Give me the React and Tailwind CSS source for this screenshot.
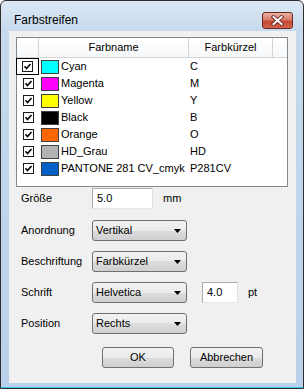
const colors = [
  { name: 'Cyan', code: 'C', color: '#00ffff' },
  { name: 'Magenta', code: 'M', color: '#ff00ff' },
  { name: 'Yellow', code: 'Y', color: '#ffff00' },
  { name: 'Black', code: 'B', color: '#000000' },
  { name: 'Orange', code: 'O', color: '#ff6600' },
  { name: 'HD_Grau', code: 'HD', color: '#b3b3b3' },
  { name: 'PANTONE 281 CV_cmyk', code: 'P281CV', color: '#0060c8' },
]

export default function App() {
  return (
    <div className="w-[304px] h-[389px] bg-white font-['Liberation_Sans',Arial,sans-serif] text-black">
      <div className="w-[304px] h-[389px] flex flex-col rounded-t-[6px] border border-[#2e2e2e] bg-[linear-gradient(to_bottom,#dce8f5,#c6d9ed_30px,#b9d1ea)] overflow-hidden">
        {/* title bar */}
        <div className="h-[30px] flex items-start justify-between pl-[13px] pr-[10px] shrink-0">
          <span className="mt-[12px] text-[12px] leading-[14px]">Farbstreifen</span>
          <CloseButton />
        </div>

        {/* client */}
        <div className="ml-[8px] w-[287px] h-[352px] shrink-0 bg-[#f0f0f0] flex flex-col text-[11px] leading-[13px]">
          <ColorTable />

          <div className="flex flex-col pl-[12px]">
            <Row label="Größe" className="mt-[1px]">
              <TextBox value="5.0" width="w-[61px]" />
              <span className="ml-[10px]">mm</span>
            </Row>
            <Row label="Anordnung" className="mt-[11px]">
              <Combo value="Vertikal" />
            </Row>
            <Row label="Beschriftung" className="mt-[10px]">
              <Combo value="Farbkürzel" />
            </Row>
            <Row label="Schrift" className="mt-[10px]">
              <Combo value="Helvetica" />
              <div className="ml-[15px]">
                <TextBox value="4.0" width="w-[36px]" />
              </div>
              <span className="ml-[10px]">pt</span>
            </Row>
            <Row label="Position" className="mt-[10px]">
              <Combo value="Rechts" />
            </Row>
          </div>

          <div className="flex gap-[16px] ml-[93px] mt-[13px]">
            <Button label="OK" width="w-[72px]" />
            <Button label="Abbrechen" width="w-[73px]" />
          </div>
        </div>

        <div className="flex-1" />
        <div className="h-[1px] bg-[#3cc8ee] shrink-0" />
      </div>
    </div>
  )
}

function CloseButton() {
  return (
    <div className="mt-[11px] w-[31px] h-[17px] rounded-[3px] border border-[#6b2a20] bg-[linear-gradient(to_bottom,#eab1a4,#d97a68_45%,#c44a36_55%,#d0634c)] flex items-center justify-center">
      <svg width="13" height="11" viewBox="0 0 13 11">
        <path d="M2.5 2 L10.5 9 M10.5 2 L2.5 9" stroke="#5a1f17" strokeWidth="3.6" strokeLinecap="square" />
        <path d="M2.5 2 L10.5 9 M10.5 2 L2.5 9" stroke="#ffffff" strokeWidth="2" strokeLinecap="square" />
      </svg>
    </div>
  )
}

function ColorTable() {
  return (
    <div className="ml-[7px] mt-[6px] w-[272px] h-[150px] border border-[#828790] bg-white flex flex-col">
      <div className="h-[20px] flex border-b border-[#d5d5d5] bg-[linear-gradient(to_bottom,#ffffff,#f7f8fa)] shrink-0">
        <div className="w-[22px] border-r border-[#d5d5d5]" />
        <div className="w-[150px] border-r border-[#d5d5d5] flex items-center justify-center">Farbname</div>
        <div className="w-[84px] border-r border-[#d5d5d5] flex items-center justify-center">Farbkürzel</div>
        <div className="flex-1" />
      </div>
      {colors.map((c, i) => (
        <div key={c.name} className="h-[17px] flex items-center shrink-0">
          <div className={`w-[22px] h-[17px] flex items-center justify-center ${i === 0 ? 'border border-black -ml-px w-[23px]' : ''}`}>
            <CheckBox />
          </div>
          <div className="w-[150px] flex items-center">
            <span className="ml-[2px] w-[18px] h-[14px] border border-[#404040]" style={{ background: c.color }} />
            <span className="ml-[2px] whitespace-nowrap">{c.name}</span>
          </div>
          <div className="pl-[1px]">{c.code}</div>
        </div>
      ))}
    </div>
  )
}

function CheckBox() {
  return (
    <svg width="11" height="11" viewBox="0 0 11 11">
      <rect x="0.5" y="0.5" width="10" height="10" fill="#fff" stroke="#1c1c1c" />
      <path d="M2.5 5.2 L4.5 7.5 L8.5 3" fill="none" stroke="#000" strokeWidth="1.6" />
    </svg>
  )
}

function Row({ label, className, children }) {
  return (
    <div className={`h-[21px] flex items-center ${className}`}>
      <span className="w-[71px]">{label}</span>
      {children}
    </div>
  )
}

function TextBox({ value, width }) {
  return (
    <div className={`${width} h-[21px] bg-white border border-[#abadb3] border-b-[#e3e9ef] border-r-[#dbdfe6] flex items-center pl-[4px]`}>
      {value}
    </div>
  )
}

function Combo({ value }) {
  return (
    <div className="w-[95px] h-[21px] rounded-[3px] border border-[#707070] bg-[linear-gradient(to_bottom,#f2f2f2,#ebebeb_50%,#dddddd_50%,#cfcfcf)] flex items-center justify-between pl-[3px] pr-[5px]">
      <span>{value}</span>
      <svg width="7" height="4" viewBox="0 0 7 4">
        <path d="M0 0 L7 0 L3.5 4 Z" fill="#000" />
      </svg>
    </div>
  )
}

function Button({ label, width }) {
  return (
    <div className={`${width} h-[21px] rounded-[3px] border border-[#707070] bg-[linear-gradient(to_bottom,#f2f2f2,#ebebeb_50%,#dddddd_50%,#cfcfcf)] flex items-center justify-center`}>
      {label}
    </div>
  )
}
